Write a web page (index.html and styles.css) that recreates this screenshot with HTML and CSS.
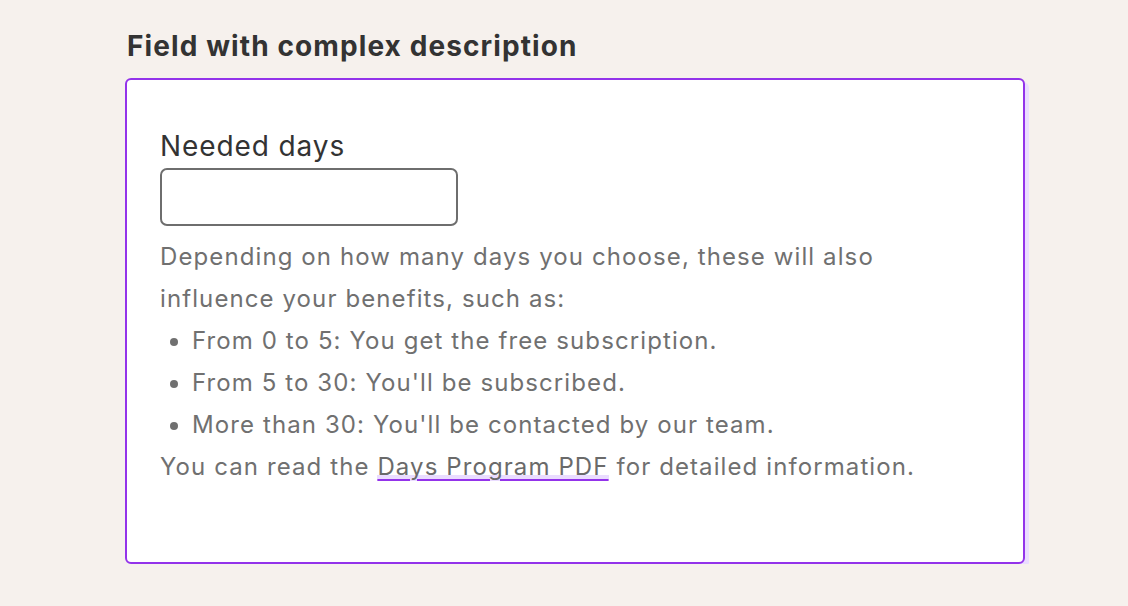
FILE: index.html
```html
<!DOCTYPE html>
<html>
<head>
<meta charset="utf-8">
<link rel="stylesheet" href="styles.css">
</head>
<body>
<main class="page">
  <h2 class="title">Field with complex description</h2>
  <section class="card">
    <label class="label" for="days">Needed days</label>
    <input class="input" id="days" type="text">
    <div class="desc">
      <p>Depending on how many days you choose, these will also influence your benefits, such as:</p>
      <ul>
        <li>From 0 to 5: You get the free subscription.</li>
        <li>From 5 to 30: You'll be subscribed.</li>
        <li>More than 30: You'll be contacted by our team.</li>
      </ul>
      <p>You can read the <a href="#" class="link">Days Program PDF</a> for detailed information.</p>
    </div>
  </section>
</main>
</body>
</html>
```
FILE: styles.css
```css
html, body {
  margin: 0;
  padding: 0;
  background: #f6f1ed;
}
body {
  font-family: "Inter", "Noto Sans", sans-serif;
}
.page {
  padding: 26px 0 0 125px;
  width: 900px;
}
.title {
  margin: 0 0 12px 2px;
  font-size: 28px;
  line-height: 40px;
  font-weight: 700;
  letter-spacing: 1.1px;
  color: #333;
}
.card {
  background: #fff;
  border: 2px solid #9333ea;
  border-radius: 6px;
  box-shadow: 4px 4px 0 #eadcff;
  padding: 46px 33px 74px 33px;
  display: flex;
  flex-direction: column;
  align-items: flex-start;
}
.label {
  font-size: 28px;
  line-height: 40px;
  letter-spacing: 0.9px;
  color: #333;
}
.input {
  width: 298px;
  height: 58px;
  box-sizing: border-box;
  border: 2px solid #6e6e6e;
  border-radius: 7px;
  margin: 2px 0 10px 0;
  background: #fff;
}
.desc {
  font-size: 24px;
  line-height: 42px;
  letter-spacing: 1.1px;
  color: #707070;
  width: 800px;
}
.desc p {
  margin: 0;
}
.desc ul {
  margin: 0;
  padding-left: 32px;
}
.link {
  color: #6a6a6a;
  text-decoration: underline;
  text-decoration-color: #9333ea;
  text-decoration-thickness: 2px;
  text-underline-offset: 4px;
  background: linear-gradient(#eadcff, #eadcff) no-repeat left bottom / 100% 6px;
}
```
